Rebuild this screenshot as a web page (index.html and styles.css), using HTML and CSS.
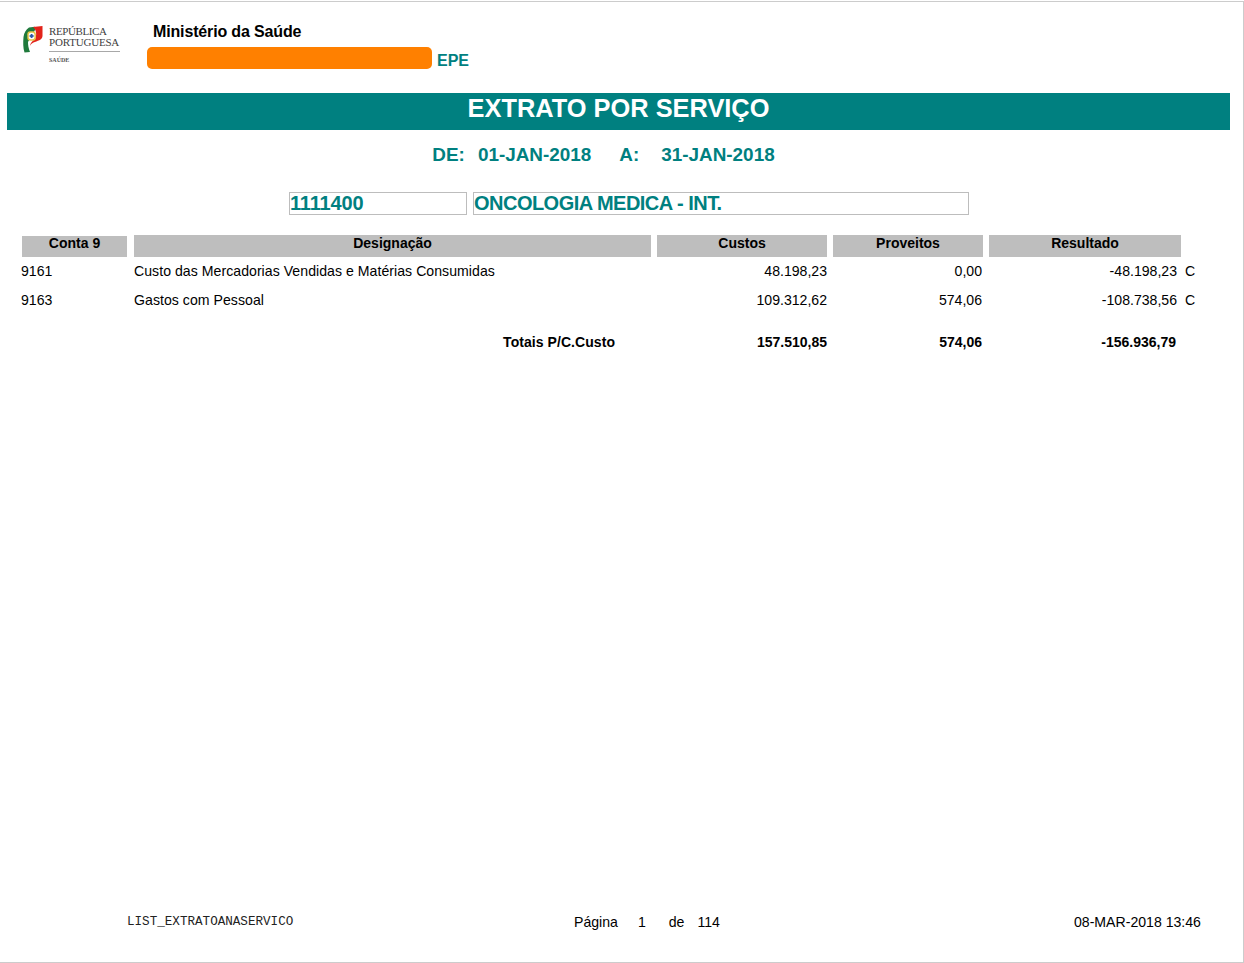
FILE: index.html
```html
<!DOCTYPE html>
<html lang="pt">
<head>
<meta charset="utf-8">
<title>Extrato por Serviço</title>
<link rel="stylesheet" href="styles.css">
</head>
<body>
<div class="page">
  <header class="top">
    <div class="logo">
      <svg class="logo-mark" width="20" height="27" viewBox="0 0 20 27" aria-hidden="true">
        <path d="M6 1.500 L12 0.800 L12 4 L5 16 C5 19 5.500 22 7 26 L1.500 26.500 C0 22 0 16 0.500 11 C1 7 3 3.500 6 1.500 Z" fill="#1f7a3c"/>
        <path d="M10 1 L19.500 0 L19.500 10 C19.500 14 14 15 10.500 16.500 C8.800 17.300 7.500 18.500 7 20 C7 17 9.500 15 12 13 C14 9 13.500 4 10 1 Z" fill="#e2231a"/>
        <rect x="4.300" y="5.300" width="8.600" height="9.400" rx="3" fill="#e8c64a"/>
        <rect x="5.800" y="6.800" width="5.600" height="6.400" rx="1.800" fill="#fff"/>
        <rect x="7.700" y="8" width="1.800" height="4" fill="#2f5aa5"/>
        <rect x="6.600" y="9.100" width="4" height="1.800" fill="#2f5aa5"/>
      </svg>
      <div class="logo-text">
        <div class="logo-name">REPÚBLICA<br><span class="logo-name-2">PORTUGUESA</span></div>
        <div class="logo-sub">SAÚDE</div>
      </div>
    </div>
    <div class="org">
      <div class="org-name">Ministério da Saúde</div>
      <div class="org-unit"><span class="redacted"></span><span class="epe">EPE</span></div>
    </div>
  </header>

  <h1 class="band">EXTRATO POR SERVIÇO</h1>

  <div class="period">
    <span>DE:</span><span class="period-from">01-JAN-2018</span><span class="period-a">A:</span><span>31-JAN-2018</span>
  </div>

  <div class="service">
    <div class="box box-code">1111400</div>
    <div class="box box-name">ONCOLOGIA MEDICA - INT.</div>
  </div>

  <div class="table">
    <div class="th th-first">Conta 9</div>
    <div class="th">Designação</div>
    <div class="th">Custos</div>
    <div class="th">Proveitos</div>
    <div class="th">Resultado</div>
    <div></div>

    <div class="td">9161</div>
    <div class="td desc">Custo das Mercadorias Vendidas e Matérias Consumidas</div>
    <div class="td num">48.198,23</div>
    <div class="td num prov">0,00</div>
    <div class="td num res">-48.198,23</div>
    <div class="td flag">C</div>

    <div class="td">9163</div>
    <div class="td desc">Gastos com Pessoal</div>
    <div class="td num">109.312,62</div>
    <div class="td num prov">574,06</div>
    <div class="td num res">-108.738,56</div>
    <div class="td flag">C</div>

    <div class="total-label">Totais P/C.Custo</div>
    <div class="total num">157.510,85</div>
    <div class="total num prov">574,06</div>
    <div class="total num res-total">-156.936,79</div>
    <div class="total"></div>
  </div>

  <footer class="foot">
    <div class="foot-id">LIST_EXTRATOANASERVICO</div>
    <div class="foot-page"><span>Página</span><span>1</span><span>de</span><span>114</span></div>
    <div class="foot-date">08-MAR-2018 13:46</div>
  </footer>
</div>
</body>
</html>
```
FILE: styles.css
```css
* { box-sizing: border-box; }
html, body { margin: 0; padding: 0; background: #fff; }
body { font-family: "Liberation Sans", Arial, sans-serif; color: #000; padding-top: 1px; }

.page {
  width: 1244px;
  height: 962px;
  border-top: 1px solid #cccccc;
  border-right: 1px solid #cccccc;
  border-bottom: 1px solid #cccccc;
  background: #fff;
  display: flex;
  flex-direction: column;
  overflow: hidden;
}

.top {
  display: flex;
  height: 91px;
  padding: 21px 0 0 23px;
}
.logo { width: 124px; display: flex; gap: 6px; padding-top: 3px; }
.logo-mark { flex: none; }
.logo-text { color: #3f3f3f; font-family: "Liberation Serif", serif; }
.logo-name {
  font-size: 11px;
  line-height: 11px;
  width: 71px;
  padding-bottom: 3px;
  border-bottom: 1px solid #a8a8a8;
  white-space: nowrap;
  letter-spacing: -0.4px;
}
.logo-name-2 { letter-spacing: -0.2px; }
.logo-sub { font-size: 6px; line-height: 6px; margin-top: 5px; color: #555; font-weight: bold; }

.org-name {
  font-size: 16px;
  font-weight: bold;
  line-height: 18px;
  margin-left: 6px;
  letter-spacing: -0.15px;
}
.org-unit { display: flex; align-items: flex-end; margin-top: 6px; }
.redacted {
  width: 285px;
  height: 22px;
  background: #ff8000;
  border-radius: 5px;
}
.epe {
  color: #008080;
  font-size: 16px;
  font-weight: bold;
  line-height: 18px;
  margin-left: 5px;
  margin-bottom: -1px;
}

.band {
  margin: 0 13px 0 7px;
  height: 37px;
  background: #008080;
  color: #fff;
  font-size: 25.400px;
  font-weight: bold;
  line-height: 30px;
  text-align: center;
}

.period {
  display: flex;
  justify-content: center;
  color: #008080;
  font-size: 18.900px;
  font-weight: bold;
  line-height: 22px;
  margin-top: 14px;
  padding-right: 36px;
}
.period-from { margin-left: 13px; }
.period-a { margin-left: 28px; margin-right: 22px; }

.service {
  display: flex;
  gap: 6px;
  margin-top: 26px;
  margin-left: 289px;
}
.box {
  height: 23px;
  border: 1px solid #bdbdbd;
  color: #008080;
  font-size: 20px;
  font-weight: bold;
  line-height: 21px;
  white-space: nowrap;
}
.box-code { width: 178px; letter-spacing: -0.15px; }
.box-name { width: 496px; letter-spacing: -0.52px; }

.table {
  display: grid;
  grid-template-columns: 106px 517px 170px 150px 192px 40px;
  column-gap: 6px;
  margin: 20px 0 0 22px;
  font-size: 14.100px;
}
.th {
  height: 22px;
  background: #bebebe;
  font-weight: bold;
  font-size: 14px;
  line-height: 16px;
  text-align: center;
}
.th-first { margin-right: 1px; margin-top: 1px; height: 21px; line-height: 14px; }
.td { height: 29px; line-height: 16px; padding-top: 6px; margin-left: -1px; }
.desc { margin-left: 0; letter-spacing: 0.04px; }
.num { text-align: right; margin-left: 0; }
.prov { padding-right: 1px; }
.res { padding-right: 4px; }
.res-total { padding-right: 5px; }
.flag { margin-left: -2px; }
.total-label {
  grid-column: 1 / span 2;
  height: 16px;
  margin-top: 19px;
  padding-right: 36px;
  font-weight: bold;
  font-size: 14px;
  line-height: 16px;
  letter-spacing: 0.06px;
  text-align: right;
}
.total { height: 16px; margin-top: 19px; font-weight: bold; font-size: 14px; line-height: 16px; }

.foot {
  margin-top: auto;
  margin-bottom: 32px;
  display: grid;
  grid-template-columns: 447px 500px auto;
  padding-left: 127px;
  align-items: center;
  font-size: 14.100px;
  line-height: 16px;
}
.foot-id { font-family: "Liberation Mono", monospace; font-size: 12.600px; color: #222; margin-top: -1px; }
.foot-page { display: flex; }
.foot-page span:nth-child(2) { margin-left: 20px; }
.foot-page span:nth-child(3) { margin-left: 23px; }
.foot-page span:nth-child(4) { margin-left: 13px; }
```
